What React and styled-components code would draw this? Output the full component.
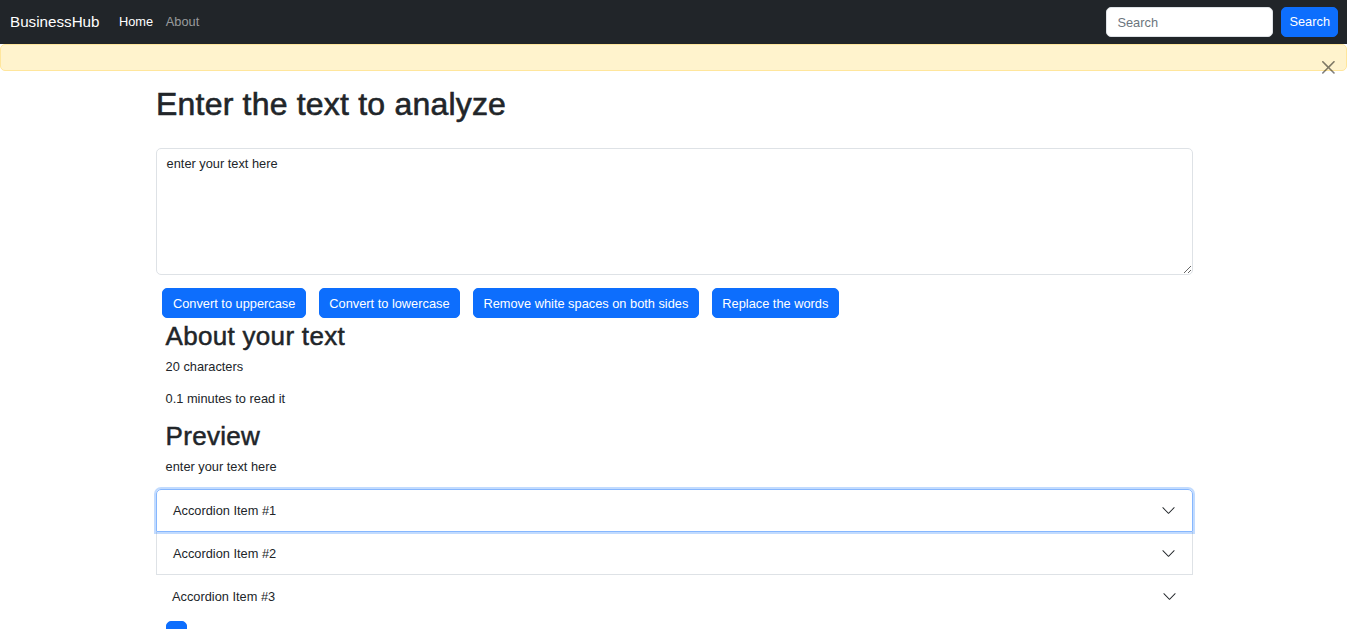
import styled, { createGlobalStyle } from "styled-components";

const GlobalStyle = createGlobalStyle`
  body {
    margin: 0;
    font-family: "Liberation Sans", Arial, sans-serif;
    font-size: 12.8px;
    line-height: 1.5;
    color: #212529;
    background: #ffffff;
  }
  * {
    box-sizing: border-box;
  }
`;

const Navbar = styled.nav`
  display: flex;
  align-items: center;
  height: 44px;
  padding: 0 9px 0 10px;
  background: #212529;
`;

const Brand = styled.a`
  font-size: 15.2px;
  line-height: 1.5;
  color: #ffffff;
  margin-right: 13px;
  text-decoration: none;
`;

const NavLinks = styled.ul`
  display: flex;
  list-style: none;
  margin: 0;
  padding: 0;
  flex: 1;
`;

const NavLink = styled.a`
  display: block;
  padding: 6.4px;
  color: ${(p) => (p.$active ? "#ffffff" : "rgba(255, 255, 255, 0.55)")};
  text-decoration: none;
`;

const SearchForm = styled.form`
  display: flex;
  align-items: center;
  gap: 8px;
`;

const SearchInput = styled.input`
  width: 167px;
  height: 30px;
  padding: 4.8px 10px;
  font: inherit;
  color: #212529;
  border: 1px solid #dee2e6;
  border-radius: 5px;
  background: #ffffff;
  outline: none;
  &::placeholder {
    color: #6c757d;
  }
`;

const Button = styled.button`
  height: 30px;
  padding: 0 ${(p) => p.$pad || 9.6}px;
  font: inherit;
  line-height: 19.2px;
  color: #ffffff;
  background: #0d6efd;
  border: 1px solid #0d6efd;
  border-radius: 5px;
  cursor: pointer;
  white-space: nowrap;
`;

const Alert = styled.div`
  position: relative;
  height: 27px;
  background: #fff3cd;
  border: 1px solid #ffe69c;
  border-radius: 5px;
`;

const CloseButton = styled.button`
  position: absolute;
  top: 0;
  right: 0;
  z-index: 2;
  padding: 16px 11px 16px 12.8px;
  border: 0;
  background: transparent;
  opacity: 0.5;
  line-height: 0;
  cursor: pointer;
  svg {
    width: 12.8px;
    height: 12.8px;
  }
`;

const Main = styled.main`
  width: 1037px;
  margin: 14px 0 0 calc(50% - 517.5px);
`;

const Title = styled.h1`
  margin: 0;
  font-size: 32px;
  font-weight: 500;
  line-height: 1.2;
  -webkit-text-stroke: 0.6px #212529;
  letter-spacing: 0.2px;
`;

const TextArea = styled.textarea`
  display: block;
  width: 100%;
  height: 127px;
  margin-top: 25px;
  padding: 4.8px 9.6px;
  font: inherit;
  color: #212529;
  border: 1px solid #dee2e6;
  border-radius: 5px;
  outline: none;
`;

const ButtonRow = styled.div`
  display: flex;
  margin-top: 13px;
  ${Button} {
    margin: 0 6.4px;
  }
`;

const Section = styled.section`
  padding: 0 9.6px;
  margin-top: ${(p) => p.$top || 0}px;
`;

const SubTitle = styled.h2`
  margin: 0 0 6px;
  font-size: 26px;
  font-weight: 500;
  line-height: 30px;
  -webkit-text-stroke: 0.5px #212529;
  letter-spacing: 0.3px;
`;

const Para = styled.p`
  margin: 0 0 12.8px;
  line-height: 19.2px;
`;

const Accordion = styled.div`
  display: flex;
  flex-direction: column;
`;

const AccordionItem = styled.div`
  border: ${(p) => (p.$plain ? "0" : "1px solid #dee2e6")};
  border-top: ${(p) => (p.$first ? "" : "0")};
  border-radius: ${(p) => (p.$first ? "5px 5px 0 0" : "0")};
  ${(p) =>
    p.$focused &&
    `
    border-color: #86b7fe;
    box-shadow: 0 0 0 2px rgba(13, 110, 253, 0.25);
    position: relative;
    z-index: 1;
  `}
`;

const AccordionButton = styled.button`
  display: flex;
  align-items: center;
  width: 100%;
  height: ${(p) => (p.$first ? 41 : 42)}px;
  padding: 0 16px;
  font: inherit;
  color: #212529;
  text-align: left;
  background: transparent;
  border: 0;
  cursor: pointer;
  svg {
    width: 15px;
    height: 15px;
    margin-left: auto;
  }
`;

const ToggleButton = styled(Button)`
  width: 21px;
  height: 24px;
  padding: 0;
  margin-top: 4px;
`;

const Chevron = () => (
  <svg viewBox="0 0 16 16" fill="#212529">
    <path d="M1.646 4.646a.5.5 0 0 1 .708 0L8 10.293l5.646-5.647a.5.5 0 0 1 .708.708l-6 6a.5.5 0 0 1-.708 0l-6-6a.5.5 0 0 1 0-.708z" />
  </svg>
);

const items = ["Accordion Item #1", "Accordion Item #2", "Accordion Item #3"];

const App = () => {
  return (
    <>
      <GlobalStyle />
      <Navbar>
        <Brand href="#">BusinessHub</Brand>
        <NavLinks>
          <li>
            <NavLink href="#" $active>
              Home
            </NavLink>
          </li>
          <li>
            <NavLink href="#">About</NavLink>
          </li>
        </NavLinks>
        <SearchForm onSubmit={(e) => e.preventDefault()}>
          <SearchInput type="search" placeholder="Search" />
          <Button type="submit" $pad={7}>
            Search
          </Button>
        </SearchForm>
      </Navbar>
      <Alert role="alert">
        <CloseButton aria-label="Close">
          <svg viewBox="0 0 16 16" fill="#000">
            <path d="M.293.293a1 1 0 0 1 1.414 0L8 6.586 14.293.293a1 1 0 1 1 1.414 1.414L9.414 8l6.293 6.293a1 1 0 0 1-1.414 1.414L8 9.414l-6.293 6.293a1 1 0 0 1-1.414-1.414L6.586 8 .293 1.707a1 1 0 0 1 0-1.414z" />
          </svg>
        </CloseButton>
      </Alert>
      <Main>
        <Title>Enter the text to analyze</Title>
        <TextArea defaultValue="enter your text here" />
        <ButtonRow>
          <Button>Convert to uppercase</Button>
          <Button>Convert to lowercase</Button>
          <Button>Remove white spaces on both sides</Button>
          <Button>Replace the words</Button>
        </ButtonRow>
        <Section $top={3}>
          <SubTitle>About your text</SubTitle>
          <Para>20 characters</Para>
          <Para>0.1 minutes to read it</Para>
          <SubTitle>Preview</SubTitle>
          <Para>enter your text here</Para>
        </Section>
        <Accordion>
          {items.map((label, i) => (
            <AccordionItem
              key={label}
              $first={i === 0}
              $focused={i === 0}
              $plain={i === 2}
            >
              <AccordionButton $first={i === 0}>
                {label}
                <Chevron />
              </AccordionButton>
            </AccordionItem>
          ))}
        </Accordion>
        <Section>
          <ToggleButton aria-label="Toggle" />
        </Section>
      </Main>
    </>
  );
};

export default App;
